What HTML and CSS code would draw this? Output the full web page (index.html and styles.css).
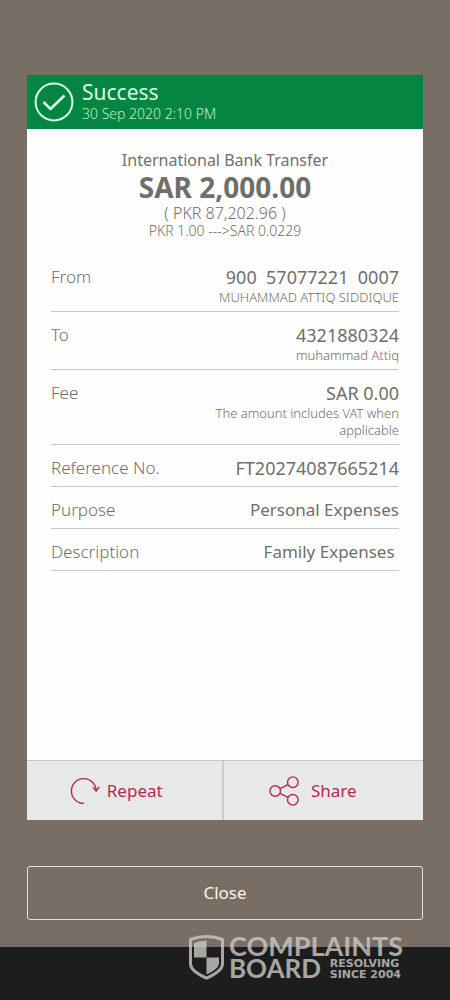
FILE: index.html
```html
<!DOCTYPE html>
<html lang="en">
<head>
<meta charset="utf-8">
<meta name="viewport" content="width=device-width, initial-scale=1">
<title>Transfer receipt</title>
<link rel="stylesheet" href="styles.css">
</head>
<body>
<main class="screen">
  <section class="receipt">
    <header class="status">
      <svg class="status-icon" viewBox="0 0 40 40" fill="none" stroke="currentColor" aria-hidden="true">
        <circle cx="20" cy="20" r="18.4" stroke-width="2"/>
        <path d="M9.5 20l7 7L30.5 13.5" stroke-width="2.6"/>
      </svg>
      <div>
        <h1 class="status-title">Success</h1>
        <p class="status-date">30 Sep 2020 2:10 PM</p>
      </div>
    </header>
    <div class="summary">
      <h2 class="kind">International Bank Transfer</h2>
      <p class="amount">SAR 2,000.00</p>
      <p class="converted">( PKR 87,202.96 )</p>
      <p class="rate">PKR 1.00 ---&gt;SAR 0.0229</p>
    </div>
    <dl class="details">
      <div class="row">
        <dt>From</dt>
        <dd><span class="value number spaced">900  57077221  0007</span><span class="note">MUHAMMAD ATTIQ SIDDIQUE</span></dd>
      </div>
      <div class="row">
        <dt>To</dt>
        <dd><span class="value number">4321880324</span><span class="note">muhammad Attiq</span></dd>
      </div>
      <div class="row">
        <dt>Fee</dt>
        <dd><span class="value number">SAR 0.00</span><span class="note">The amount includes VAT when applicable</span></dd>
      </div>
      <div class="row">
        <dt>Reference No.</dt>
        <dd><span class="value number">FT20274087665214</span></dd>
      </div>
      <div class="row">
        <dt>Purpose</dt>
        <dd><span class="value">Personal Expenses</span></dd>
      </div>
      <div class="row">
        <dt>Description</dt>
        <dd><span class="value spaced">Family Expenses </span></dd>
      </div>
    </dl>
    <div class="actions">
      <button class="action" type="button">
        <svg class="action-icon" viewBox="0 0 30 28" fill="none" stroke="currentColor" stroke-width="1.4" aria-hidden="true">
          <path d="M14 26.4A12.4 12.4 0 1 1 26.2 13.5"/>
          <path d="M22.8 10.3l3.4 3.8 3-4.2"/>
        </svg>
        Repeat
      </button>
      <button class="action share" type="button">
        <svg class="action-icon" viewBox="0 0 30 30" fill="none" stroke="currentColor" stroke-width="1.4" aria-hidden="true">
          <circle cx="6.2" cy="15" r="5.3"/>
          <circle cx="23.8" cy="6.2" r="5.3"/>
          <circle cx="23.8" cy="23.8" r="5.3"/>
          <path d="M11 12.7l8-4M11 17.3l8 4"/>
        </svg>
        Share
      </button>
    </div>
  </section>
  <button class="close" type="button">Close</button>
</main>
<footer class="navbar">
  <div class="watermark">
    <svg class="shield" viewBox="0 0 35 45" aria-hidden="true">
      <path d="M1.5 4.5Q17.5-1.5 33.5 4.5V29Q33.5 36 17.5 43.2Q1.5 36 1.5 29Z" fill="none" stroke="currentColor" stroke-width="3"/>
      <path d="M5 8Q11 5.5 17.5 5.5V22.5H5Z" fill="currentColor"/>
      <path d="M17.5 22.5H30V29Q29 34.5 17.5 39.5Z" fill="currentColor"/>
    </svg>
    <div class="brand">
      <span class="brand-top">COMPLAINTS</span>
      <div class="brand-bottom">
        <span class="brand-board">BOARD</span>
        <span class="brand-tag">RESOLVING<br>SINCE 2004</span>
      </div>
    </div>
  </div>
</footer>
</body>
</html>
```
FILE: styles.css
```css
* {
  box-sizing: border-box;
}

body {
  margin: 0;
  min-height: 100vh;
  display: flex;
  flex-direction: column;
  background: #796e65;
  color: #706e6a;
  font-family: "Noto Sans", "Open Sans", sans-serif;
  font-size: 17px;
  line-height: 20px;
}

h1, h2, p, dl, dd {
  margin: 0;
  font-weight: 400;
}

button {
  font: inherit;
  cursor: pointer;
}

.screen {
  flex: 1;
  display: flex;
  flex-direction: column;
  padding: 75px 27px 27px;
}

.receipt {
  flex: 1;
  display: flex;
  flex-direction: column;
  background: #fefefe;
}

.status {
  display: flex;
  align-items: center;
  gap: 8px;
  height: 54px;
  padding: 0 7px;
  background: #048542;
  color: #d9ffe3;
}

.status-icon {
  width: 40px;
  height: 40px;
}

.status-title {
  font-size: 21px;
  line-height: 26px;
  margin-top: -2px;
}

.status-date {
  font-size: 14px;
  line-height: 18px;
  font-weight: 300;
  color: #bdf0cd;
}

.summary {
  padding: 20px 24px 15px;
  text-align: center;
}

.kind {
  font-size: 16px;
  line-height: 22px;
}

.amount {
  font-size: 28px;
  line-height: 32px;
  font-weight: 700;
}

.converted {
  font-weight: 300;
  font-size: 16px;
  line-height: 20px;
}

.rate {
  font-weight: 300;
  font-size: 14px;
  line-height: 16px;
}

.details {
  padding: 0 24px;
}

.row {
  display: flex;
  justify-content: space-between;
  min-height: 42px;
  padding: 13px 0 5px;
  border-bottom: 1px solid #c8c8c8;
}

.row dt {
  font-weight: 300;
}

.row dd {
  width: 200px;
  text-align: right;
}

.value,
.note {
  display: block;
}

.number {
  font-size: 18px;
}

.spaced {
  white-space: pre;
}

.note {
  margin-top: 2px;
  font-weight: 300;
  font-size: 13px;
  line-height: 17px;
}

.actions {
  display: flex;
  height: 60px;
  margin-top: auto;
  border-top: 1px solid #c4c4c4;
  background: #e7e8e8;
}

.action {
  flex: 1;
  display: flex;
  align-items: center;
  justify-content: center;
  gap: 7px;
  padding: 0 16px 0 0;
  border: 0;
  background: none;
  color: #b8284f;
}

.share {
  gap: 12px;
  padding-right: 21px;
  border-left: 2px solid #cccccc;
}

.action-icon {
  width: 30px;
  height: 30px;
}

.close {
  height: 54px;
  margin-top: 46px;
  border: 1px solid #e8dfd8;
  border-radius: 3px;
  background: none;
  color: #f8f3ee;
}

.navbar {
  position: relative;
  height: 53px;
  background: #1c1d1d;
}

.watermark {
  position: absolute;
  top: -12px;
  right: 49px;
  display: flex;
  gap: 5px;
  color: #cbc8c5;
  opacity: 0.8;
}

.shield {
  width: 35px;
  height: 45px;
}

.brand {
  width: 172px;
  font-family: Lato, sans-serif;
  font-weight: 700;
}

.brand-top {
  display: block;
  font-size: 27px;
  line-height: 22px;
}

.brand-bottom {
  display: flex;
  justify-content: space-between;
  align-items: center;
}

.brand-board {
  font-size: 26px;
  line-height: 23px;
}

.brand-tag {
  font-family: "DejaVu Sans", sans-serif;
  font-size: 11px;
  line-height: 11px;
  font-weight: 700;
}
```
